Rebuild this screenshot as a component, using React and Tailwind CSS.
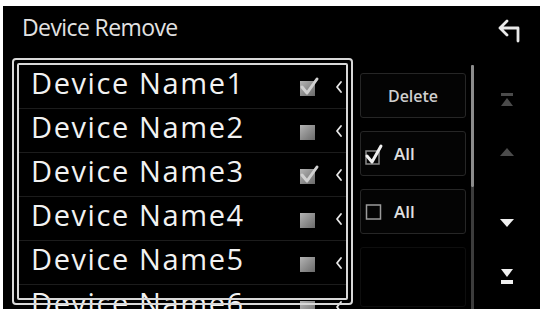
import React from "react";

const font = { fontFamily: '"Open Sans", "Noto Sans", sans-serif' };

function RowCheck({ checked }) {
  return (
    <svg width="22" height="22" viewBox="0 0 22 22">
      <defs>
        <linearGradient id="g1" x1="0" y1="0" x2="1" y2="1">
          <stop offset="0" stopColor="#b4b4b4" />
          <stop offset="1" stopColor="#6a6a6a" />
        </linearGradient>
      </defs>
      <rect x="2" y="5" width="15" height="15" fill="url(#g1)" />
      {checked && (
        <path d="M4 11 L9 17 L19 3" stroke="#d0d0d0" strokeWidth="3" fill="none" strokeLinecap="round" strokeLinejoin="round" />
      )}
    </svg>
  );
}

function Chevron() {
  return (
    <svg width="8" height="14" viewBox="0 0 8 14">
      <path d="M6 2 L2 7 L6 12" stroke="#e8e8e8" strokeWidth="1.8" fill="none" strokeLinecap="round" strokeLinejoin="round" />
    </svg>
  );
}

const rows = [
  { name: "Device Name1", checked: true },
  { name: "Device Name2", checked: false },
  { name: "Device Name3", checked: true },
  { name: "Device Name4", checked: false },
  { name: "Device Name5", checked: false },
  { name: "Device Name6", checked: false },
];

export default function App() {
  return (
    <div className="w-[543px] h-[309px] bg-white overflow-hidden pt-[6px] px-[3px]" style={font}>
      <div className="bg-black h-[303px] flex flex-col overflow-hidden">
        <div className="h-[52px] flex items-center justify-between pl-[19px] pr-[15px] shrink-0">
          <span className="text-[23px] font-medium text-[#e2e2e2] leading-none tracking-[-0.6px] mt-[-9px]">Device Remove</span>
          <svg width="28" height="28" viewBox="0 0 28 28" className="mt-[-4px]">
            <path d="M10 5 L3 12 L10 19 M3 12 H21 V25" stroke="#e8e8e8" strokeWidth="2.8" fill="none" strokeLinecap="round" strokeLinejoin="round" />
          </svg>
        </div>
        <div className="flex flex-1 min-h-0">
          <div className="relative ml-[9px] w-[341px] h-[247px] shrink-0">
            <div className="h-full pt-[7px] pl-[7px]">
              {rows.map((r, i) => (
                <div key={i} className="h-[44px] flex items-center border-b border-[#1c1c1c] mr-[7px]">
                  <span className="pl-[12px] text-[29px] font-medium text-[#f2f2f2] leading-none tracking-[1.6px] w-[279px] mt-[-9px] whitespace-nowrap">{r.name}</span>
                  <RowCheck checked={r.checked} />
                  <span className="ml-[15px]"><Chevron /></span>
                </div>
              ))}
            </div>
            <div className="absolute inset-0 border-2 border-[#d8d8d8] rounded-[4px] p-[3px] pointer-events-none">
              <div className="h-full border-2 border-[#d8d8d8] rounded-[2px]" />
            </div>
          </div>
          <div className="ml-[7px] w-[106px] flex flex-col gap-[13px] pt-[15px] shrink-0">
            <div className="h-[45px] border border-[#262626] rounded-[3px] bg-[#040404] flex items-center justify-center">
              <span className="text-[16px] font-semibold text-[#cfcfcf]">Delete</span>
            </div>
            <div className="h-[45px] border border-[#262626] rounded-[3px] bg-[#040404] flex items-center pl-[3px] gap-[10px]">
              <svg width="20" height="22" viewBox="0 0 20 22">
                <rect x="2" y="8" width="13" height="13" stroke="#8a8a8a" strokeWidth="1.5" fill="none" />
                <path d="M3 13 L8 19 L17 3" stroke="#f0f0f0" strokeWidth="3" fill="none" strokeLinecap="round" strokeLinejoin="round" />
              </svg>
              <span className="text-[17px] font-semibold text-[#e0e0e0]">All</span>
            </div>
            <div className="h-[45px] border border-[#262626] rounded-[3px] bg-[#040404] flex items-center pl-[3px] gap-[10px]">
              <svg width="20" height="20" viewBox="0 0 20 20">
                <rect x="2.5" y="3" width="14" height="14" stroke="#9a9a9a" strokeWidth="1.5" fill="none" />
              </svg>
              <span className="text-[17px] font-semibold text-[#e0e0e0]">All</span>
            </div>
            <div className="h-[60px] border border-[#0e0e0e] rounded-[3px]" />
          </div>
          <div className="ml-[5px] w-[3px] pt-[7px] flex flex-col shrink-0">
            <div className="h-[122px] bg-[#8c8c8c] rounded-[1px]" />
            <div className="flex-1 bg-[#3c3c3c]" />
          </div>
          <div className="flex-1 flex flex-col items-center pt-[34px]">
            <svg width="16" height="16" viewBox="0 0 16 16" className="opacity-40">
              <rect x="2" y="1" width="12" height="3" fill="#bbb" />
              <path d="M8 6 L14 14 H2 Z" fill="#bbb" />
            </svg>
            <svg width="16" height="12" viewBox="0 0 16 12" className="mt-[38px] opacity-40">
              <path d="M8 2 L15 10 H1 Z" fill="#bbb" />
            </svg>
            <svg width="16" height="12" viewBox="0 0 16 12" className="mt-[59px]">
              <path d="M1 2 H15 L8 10 Z" fill="#f0f0f0" />
            </svg>
            <svg width="16" height="18" viewBox="0 0 16 18" className="mt-[39px]">
              <path d="M2 1 H14 L8 9 Z" fill="#f0f0f0" />
              <rect x="2" y="12" width="12" height="4" fill="#f0f0f0" />
            </svg>
          </div>
        </div>
      </div>
    </div>
  );
}
